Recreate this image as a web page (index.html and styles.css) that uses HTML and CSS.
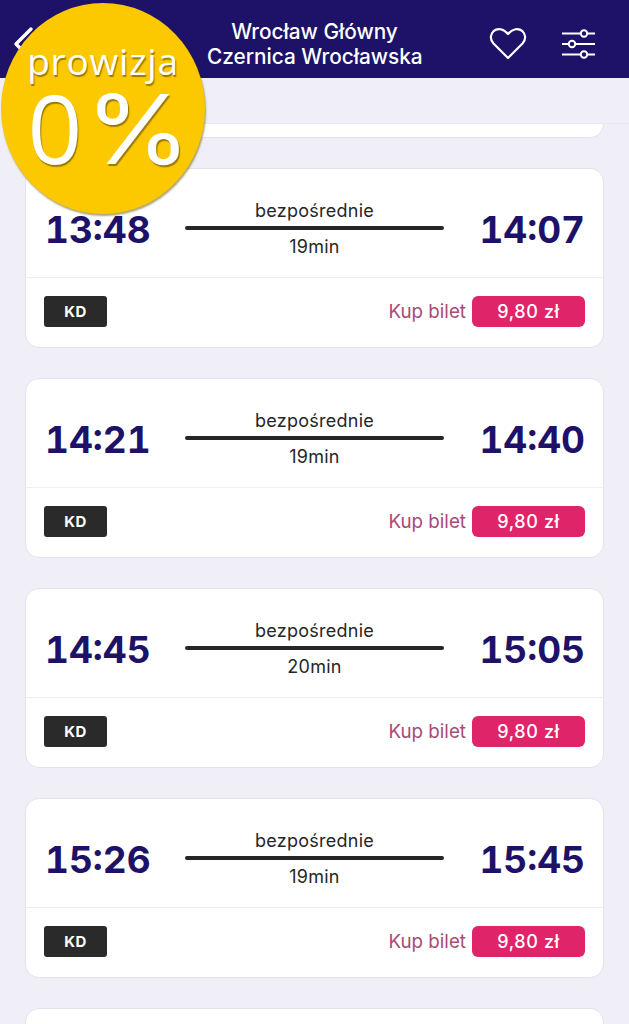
FILE: index.html
```html
<!DOCTYPE html>
<html lang="en">
<head>
    <meta charset="UTF-8">
    <meta name="viewport" content="width=device-width, initial-scale=1.0">
    <title>Wrocław Główny - Czernica Wrocławska</title>
    <link rel="stylesheet" href="styles.css">
</head>
<body>

<header class="topbar">
    <svg class="back" width="40" height="50" viewBox="0 0 40 50"><path d="M31 9 L16 24 L31 39" fill="none" stroke="#fff" stroke-width="3.4" stroke-linecap="round" stroke-linejoin="round"/></svg>
    <div class="route">
        <div>Wrocław Główny</div>
        <div>Czernica Wrocławska</div>
    </div>
    <svg class="heart" width="38" height="33" viewBox="0 0 38 33"><path d="M19 31 L4.5 16.5 C0.5 12 1.5 7 4.5 4.2 C8.5 0.8 14.5 1.4 19 7 C23.5 1.4 29.5 0.8 33.5 4.2 C36.5 7 37.5 12 33.5 16.5 Z" fill="none" stroke="#fff" stroke-width="2.2" stroke-linejoin="round"/></svg>
    <svg class="filter" width="33" height="30" viewBox="0 0 33 30">
        <g stroke="#fff" stroke-width="2" fill="#1d1268">
            <path d="M0 4.500H33M0 15H33M0 25.500H33"/>
            <circle cx="22" cy="4.500" r="3.200"/>
            <circle cx="10" cy="15" r="3.200"/>
            <circle cx="22" cy="25.500" r="3.200"/>
        </g>
    </svg>
</header>

<div class="subbar"></div>

<main class="list">
    <div class="card card-cut"></div>

    <section class="card">
        <div class="times">
            <span class="time">13:48</span>
            <div class="middle"><span>bezpośrednie</span><i class="line"></i><span>19min</span></div>
            <span class="time time-end">14:07</span>
        </div>
        <div class="buy">
            <span class="carrier">KD</span>
            <span class="buy-label">Kup bilet</span>
            <span class="price">9,80 zł</span>
        </div>
    </section>

    <section class="card">
        <div class="times">
            <span class="time">14:21</span>
            <div class="middle"><span>bezpośrednie</span><i class="line"></i><span>19min</span></div>
            <span class="time time-end">14:40</span>
        </div>
        <div class="buy">
            <span class="carrier">KD</span>
            <span class="buy-label">Kup bilet</span>
            <span class="price">9,80 zł</span>
        </div>
    </section>

    <section class="card">
        <div class="times">
            <span class="time">14:45</span>
            <div class="middle"><span>bezpośrednie</span><i class="line"></i><span>20min</span></div>
            <span class="time time-end">15:05</span>
        </div>
        <div class="buy">
            <span class="carrier">KD</span>
            <span class="buy-label">Kup bilet</span>
            <span class="price">9,80 zł</span>
        </div>
    </section>

    <section class="card">
        <div class="times">
            <span class="time">15:26</span>
            <div class="middle"><span>bezpośrednie</span><i class="line"></i><span>19min</span></div>
            <span class="time time-end">15:45</span>
        </div>
        <div class="buy">
            <span class="carrier">KD</span>
            <span class="buy-label">Kup bilet</span>
            <span class="price">9,80 zł</span>
        </div>
    </section>

    <div class="card card-next"></div>
</main>

<div class="promo">
    <div class="promo-label">prowizja</div>
    <div class="promo-value">0<span class="percent">%</span></div>
</div>

</body>
</html>
```

FILE: styles.css
```css
:root{
    --navy: #1d1268;
    --pink: #e0246a;
    --bg: #f0eff7;
}

*{
    box-sizing: border-box;
    font-family: "Inter", "Liberation Sans", sans-serif;
}

html,body{
    height: 100%;
    overflow: hidden;
}

body{
    margin: 0;
    background: var(--bg);
    color: #262626;
}

.topbar{
    height: 78px;
    background: var(--navy);
    display: flex;
    align-items: center;
    padding: 0 34px 0 207px;
    position: relative;
    color: white;
}

.back{
    position: absolute;
    left: 0;
    top: 20px;
}

.route{
    width: 215px;
    font-size: 20.8px;
    line-height: 25px;
    font-weight: 500;
    text-align: center;
    white-space: nowrap;
    padding-top: 9px;
}

.heart{
    margin-left: auto;
    margin-top: 8px;
    margin-right: 35px;
}

.filter{
    margin-top: 9px;
}

.subbar{
    height: 46px;
    border-bottom: 1px solid #e9e8f0;
}

.list{
    padding: 0 25px;
    display: flex;
    flex-direction: column;
    gap: 30px;
}

.card{
    background: white;
    border-radius: 14px;
    border: 1px solid #e4e3ec;
    height: 180px;
    flex: none;
}

.card-cut{
    height: 14px;
    border-top: none;
    border-radius: 0 0 14px 14px;
}

.card-next{
    height: 60px;
}

.times{
    height: 109px;
    border-bottom: 1px solid #efeef4;
    display: grid;
    grid-template-columns: 140px 259px 1fr;
    align-items: center;
    padding: 12px 18px 0 19px;
}

.time{
    font-size: 37px;
    font-weight: 700;
    color: var(--navy);
    font-variant-numeric: tabular-nums;
}

.time-end{
    text-align: right;
}

.middle{
    display: flex;
    flex-direction: column;
    align-items: center;
    font-size: 18px;
    letter-spacing: 0.25px;
    line-height: 22px;
    margin-top: -1px;
}

.line{
    display: block;
    width: 100%;
    height: 4px;
    border-radius: 2px;
    background: #262626;
    margin: 4px 0 6px;
}

.buy{
    height: 69px;
    display: flex;
    align-items: center;
    padding: 0 18px 2px;
}

.carrier{
    width: 63px;
    height: 31px;
    border-radius: 3px;
    background: #2a2a2a;
    color: white;
    font-size: 15px;
    font-weight: 700;
    letter-spacing: 0.5px;
    display: flex;
    align-items: center;
    justify-content: center;
}

.buy-label{
    margin-left: auto;
    margin-right: 6px;
    font-size: 18.8px;
    color: #a94a78;
}

.price{
    width: 113px;
    height: 31px;
    border-radius: 6px;
    background: var(--pink);
    color: white;
    font-size: 18px;
    font-weight: 500;
    letter-spacing: 0.6px;
    display: flex;
    align-items: center;
    justify-content: center;
}

.promo{
    position: absolute;
    left: 1px;
    top: 3px;
    width: 204px;
    height: 211px;
    border-radius: 50%;
    background: #fcc800;
    box-shadow: 1px 2px 2px rgba(110,90,0,0.55);
    display: flex;
    flex-direction: column;
    align-items: center;
    color: white;
}

.promo-label,.promo-value{
    font-family: "Open Sans", sans-serif;
    text-shadow: 1px 2px 1px rgba(120,95,0,0.75);
}

.promo-label{
    font-size: 37px;
    font-weight: 500;
    letter-spacing: 0.8px;
    line-height: 46px;
    margin-top: 35px;
}

.promo-value{
    font-size: 96px;
    font-weight: 400;
    line-height: 86px;
    white-space: nowrap;
    padding-left: 12px;
}

.percent{
    display: inline-block;
    margin-left: 9px;
    margin-right: 5px;
    transform: scaleX(1.12);
}
```
